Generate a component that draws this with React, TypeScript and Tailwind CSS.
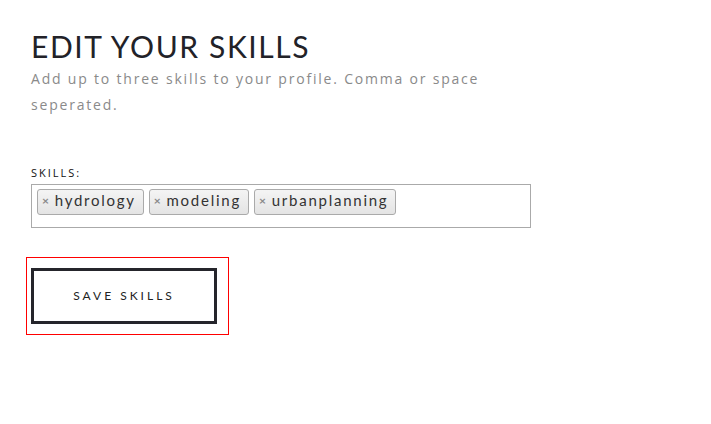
export default function App() {
  const skills = ['hydrology', 'modeling', 'urbanplanning'];

  return (
    <div className="min-h-[424px] w-[711px] bg-white pl-[31px] pt-[28px]">
      <h1 className="font-['Lato','Noto_Sans',sans-serif] text-[30px] leading-[36px] tracking-[1.6px] text-[#222228]">
        EDIT YOUR SKILLS
      </h1>
      <p className="mt-[2px] w-[470px] font-['Open_Sans',sans-serif] text-[14px] leading-[26px] tracking-[1.8px] text-[#8a8a8a]">
        Add up to three skills to your profile. Comma or space seperated.
      </p>

      <div className="mt-[48px]">
        <label className="block font-['Open_Sans',sans-serif] text-[11px] leading-[14px] tracking-[2px] text-[#111]">
          SKILLS:
        </label>
        <div className="mt-[4px] flex h-[44px] w-[500px] items-start gap-[5px] border border-[#aaa] bg-white px-[5px] pt-[4px]">
          {skills.map((s) => (
            <span
              key={s}
              className="flex h-[26px] items-center gap-[4px] rounded-[3px] border border-[#aaa] bg-gradient-to-b from-[#f4f4f4] to-[#e4e4e4] pb-[3px] pl-[4px] pr-[7px] font-['Lato',sans-serif] text-[15px] tracking-[1.75px] text-[#333]"
            >
              <span className="text-[12px] font-bold text-[#888]">×</span>
              {s}
            </span>
          ))}
        </div>
      </div>

      <div className="mt-[29px] ml-[-5px] w-[203px] border border-[#f00] pt-[10px] pb-[10px] pl-[4px]">
        <button className="flex h-[56px] w-[186px] items-center justify-center border-[3px] border-[#25252b] bg-white font-['Lato',sans-serif] text-[12px] tracking-[3px] text-[#222]">
          SAVE SKILLS
        </button>
      </div>
    </div>
  );
}
